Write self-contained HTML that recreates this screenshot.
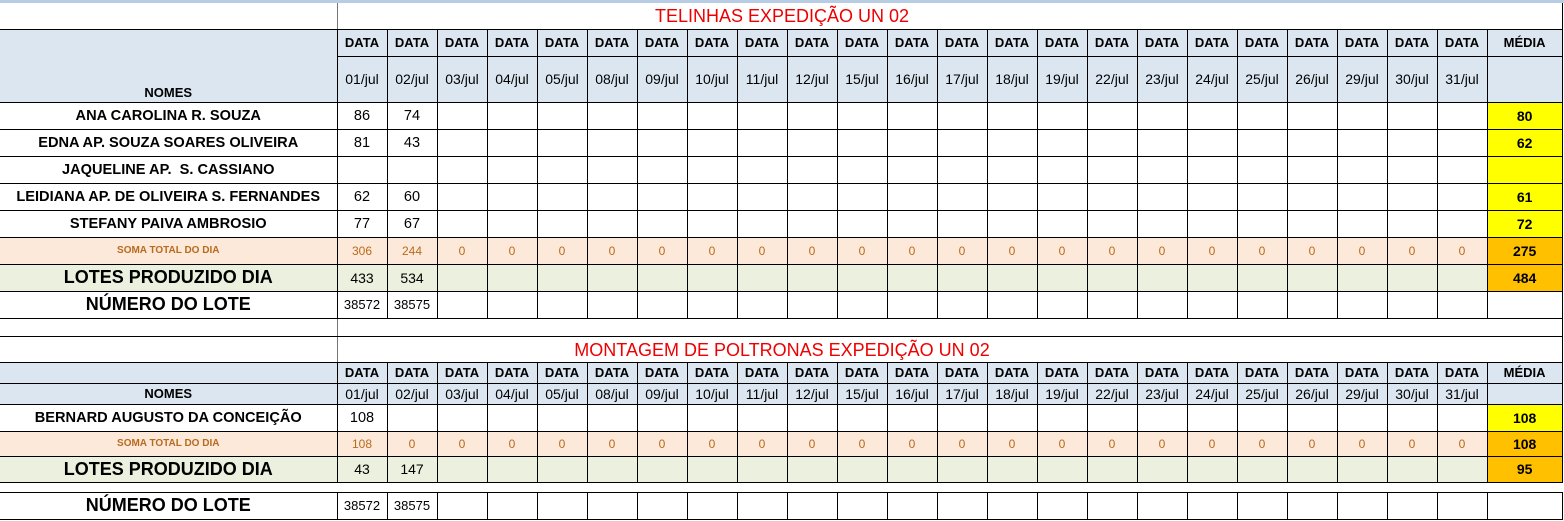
<!DOCTYPE html>
<html><head><meta charset="utf-8"><style>
body{margin:0;width:1564px;height:521px;overflow:hidden;background:#fff;font-family:"Liberation Sans",sans-serif;position:relative}
.top{position:absolute;left:0;top:0;width:1564px;height:3px;background:#b8cce4}
table{position:absolute;left:0;border-collapse:collapse;table-layout:fixed;width:1562px}
td{border:1px solid #000;padding:0;text-align:center;font-size:14.5px;white-space:nowrap;overflow:hidden}
td:first-child{border-left:none}
.h td{background:#dce6f1;font-weight:bold;font-size:13px}
.d td{background:#dce6f1;font-size:14px}
.n td:first-child{font-weight:bold;font-size:14.6px}
.s td{background:#fde9d9;color:#b86a1e;font-size:12px}
.s td:first-child{font-size:10px;font-weight:bold}
.l td{background:#ebf1de;font-size:14px}
.l td:first-child{font-size:18px;font-weight:bold}
.nl td:first-child{font-size:18px;font-weight:bold}
.nl td{font-size:13px}
td.y{background:#ffff00!important;font-weight:bold;color:#000!important;font-size:14px!important}
td.o{background:#ffc000!important;font-weight:bold;color:#000!important;font-size:14px!important}
.t td{border:none;border-bottom:1px solid #000}
.t td.v{border-left:1px solid #777;border-right:1px solid #000}
.title{position:absolute;left:0;width:1564px;text-align:center;color:#e00;font-size:18px}
.blank td{border:none;border-top:1px solid #000;border-bottom:1px solid #000}
</style></head><body>
<div class="top"></div>
<table style="top:3px">
<colgroup><col style="width:337px"><col span="23" style="width:50px"><col style="width:75px"></colgroup>
<tr class="t" style="height:26px"><td style="border-bottom:1px solid #000"></td><td class="v" colspan="24"></td></tr>
<tr class="h" style="height:27px"><td style="border-bottom:none"></td><td>DATA</td><td>DATA</td><td>DATA</td><td>DATA</td><td>DATA</td><td>DATA</td><td>DATA</td><td>DATA</td><td>DATA</td><td>DATA</td><td>DATA</td><td>DATA</td><td>DATA</td><td>DATA</td><td>DATA</td><td>DATA</td><td>DATA</td><td>DATA</td><td>DATA</td><td>DATA</td><td>DATA</td><td>DATA</td><td>DATA</td><td>MÉDIA</td></tr>
<tr class="d" style="height:46px"><td style="border-top:none;font-weight:bold;font-size:13px;vertical-align:bottom;padding-bottom:2px">NOMES</td><td>01/jul</td><td>02/jul</td><td>03/jul</td><td>04/jul</td><td>05/jul</td><td>08/jul</td><td>09/jul</td><td>10/jul</td><td>11/jul</td><td>12/jul</td><td>15/jul</td><td>16/jul</td><td>17/jul</td><td>18/jul</td><td>19/jul</td><td>22/jul</td><td>23/jul</td><td>24/jul</td><td>25/jul</td><td>26/jul</td><td>29/jul</td><td>30/jul</td><td>31/jul</td><td></td></tr>
<tr class="n" style="height:27px"><td>ANA CAROLINA R. SOUZA</td><td>86</td><td>74</td><td></td><td></td><td></td><td></td><td></td><td></td><td></td><td></td><td></td><td></td><td></td><td></td><td></td><td></td><td></td><td></td><td></td><td></td><td></td><td></td><td></td><td class="y">80</td></tr>
<tr class="n" style="height:27px"><td>EDNA AP. SOUZA SOARES OLIVEIRA</td><td>81</td><td>43</td><td></td><td></td><td></td><td></td><td></td><td></td><td></td><td></td><td></td><td></td><td></td><td></td><td></td><td></td><td></td><td></td><td></td><td></td><td></td><td></td><td></td><td class="y">62</td></tr>
<tr class="n" style="height:27px"><td>JAQUELINE AP.&nbsp; S. CASSIANO</td><td></td><td></td><td></td><td></td><td></td><td></td><td></td><td></td><td></td><td></td><td></td><td></td><td></td><td></td><td></td><td></td><td></td><td></td><td></td><td></td><td></td><td></td><td></td><td class="y"></td></tr>
<tr class="n" style="height:27px"><td>LEIDIANA AP. DE OLIVEIRA S. FERNANDES</td><td>62</td><td>60</td><td></td><td></td><td></td><td></td><td></td><td></td><td></td><td></td><td></td><td></td><td></td><td></td><td></td><td></td><td></td><td></td><td></td><td></td><td></td><td></td><td></td><td class="y">61</td></tr>
<tr class="n" style="height:27px"><td>STEFANY PAIVA AMBROSIO</td><td>77</td><td>67</td><td></td><td></td><td></td><td></td><td></td><td></td><td></td><td></td><td></td><td></td><td></td><td></td><td></td><td></td><td></td><td></td><td></td><td></td><td></td><td></td><td></td><td class="y">72</td></tr>
<tr class="s" style="height:27px"><td>SOMA TOTAL DO DIA</td><td>306</td><td>244</td><td>0</td><td>0</td><td>0</td><td>0</td><td>0</td><td>0</td><td>0</td><td>0</td><td>0</td><td>0</td><td>0</td><td>0</td><td>0</td><td>0</td><td>0</td><td>0</td><td>0</td><td>0</td><td>0</td><td>0</td><td>0</td><td class="o">275</td></tr>
<tr class="l" style="height:27px"><td>LOTES PRODUZIDO DIA</td><td>433</td><td>534</td><td></td><td></td><td></td><td></td><td></td><td></td><td></td><td></td><td></td><td></td><td></td><td></td><td></td><td></td><td></td><td></td><td></td><td></td><td></td><td></td><td></td><td class="o">484</td></tr>
<tr class="nl" style="height:27px"><td>NÚMERO DO LOTE</td><td>38572</td><td>38575</td><td></td><td></td><td></td><td></td><td></td><td></td><td></td><td></td><td></td><td></td><td></td><td></td><td></td><td></td><td></td><td></td><td></td><td></td><td></td><td></td><td></td><td></td></tr>
<tr class="t" style="height:18px"><td></td><td class="v" colspan="24"></td></tr>
<tr class="t" style="height:26px"><td></td><td class="v" colspan="24"></td></tr>
<tr class="h" style="height:21px"><td></td><td>DATA</td><td>DATA</td><td>DATA</td><td>DATA</td><td>DATA</td><td>DATA</td><td>DATA</td><td>DATA</td><td>DATA</td><td>DATA</td><td>DATA</td><td>DATA</td><td>DATA</td><td>DATA</td><td>DATA</td><td>DATA</td><td>DATA</td><td>DATA</td><td>DATA</td><td>DATA</td><td>DATA</td><td>DATA</td><td>DATA</td><td>MÉDIA</td></tr>
<tr class="d" style="height:21px"><td style="font-weight:bold;font-size:13px">NOMES</td><td>01/jul</td><td>02/jul</td><td>03/jul</td><td>04/jul</td><td>05/jul</td><td>08/jul</td><td>09/jul</td><td>10/jul</td><td>11/jul</td><td>12/jul</td><td>15/jul</td><td>16/jul</td><td>17/jul</td><td>18/jul</td><td>19/jul</td><td>22/jul</td><td>23/jul</td><td>24/jul</td><td>25/jul</td><td>26/jul</td><td>29/jul</td><td>30/jul</td><td>31/jul</td><td></td></tr>
<tr class="n" style="height:27px"><td>BERNARD AUGUSTO DA CONCEIÇÃO</td><td>108</td><td></td><td></td><td></td><td></td><td></td><td></td><td></td><td></td><td></td><td></td><td></td><td></td><td></td><td></td><td></td><td></td><td></td><td></td><td></td><td></td><td></td><td></td><td class="y">108</td></tr>
<tr class="s" style="height:25px"><td>SOMA TOTAL DO DIA</td><td>108</td><td>0</td><td>0</td><td>0</td><td>0</td><td>0</td><td>0</td><td>0</td><td>0</td><td>0</td><td>0</td><td>0</td><td>0</td><td>0</td><td>0</td><td>0</td><td>0</td><td>0</td><td>0</td><td>0</td><td>0</td><td>0</td><td>0</td><td class="o">108</td></tr>
<tr class="l" style="height:26px"><td>LOTES PRODUZIDO DIA</td><td>43</td><td>147</td><td></td><td></td><td></td><td></td><td></td><td></td><td></td><td></td><td></td><td></td><td></td><td></td><td></td><td></td><td></td><td></td><td></td><td></td><td></td><td></td><td></td><td class="o">95</td></tr>
<tr class="blank" style="height:10px"><td colspan="25"></td></tr>
<tr class="nl" style="height:27px"><td>NÚMERO DO LOTE</td><td>38572</td><td>38575</td><td></td><td></td><td></td><td></td><td></td><td></td><td></td><td></td><td></td><td></td><td></td><td></td><td></td><td></td><td></td><td></td><td></td><td></td><td></td><td></td><td></td><td></td></tr>
</table>
<div class="title" style="top:6px">TELINHAS EXPEDIÇÃO UN 02</div>
<div class="title" style="top:340px">MONTAGEM DE POLTRONAS EXPEDIÇÃO UN 02</div>
</body></html>
